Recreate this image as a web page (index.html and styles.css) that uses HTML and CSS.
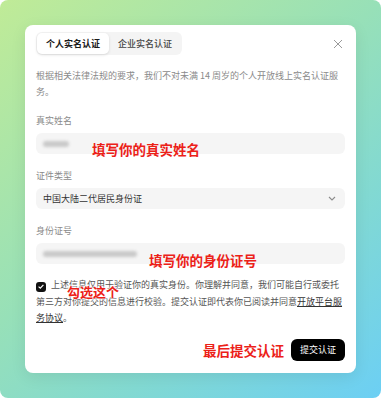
FILE: index.html
```html
<!DOCTYPE html>
<html lang="zh-CN">

<head>
    <meta charset="UTF-8">
    <meta name="viewport" content="width=device-width, initial-scale=1.0">
    <title>实名认证</title>
    <link rel="stylesheet" href="styles.css">
</head>

<body>
    <div class="backdrop">
        <div class="modal">
            <div class="modal-header">
                <div class="tabs">
                    <button class="tab tab-active">个人实名认证</button>
                    <button class="tab">企业实名认证</button>
                </div>
                <button class="close-button">
                    <svg width="10" height="10" viewBox="0 0 10 10" fill="none" stroke="#9a9a9a" stroke-width="1">
                        <path d="M1 1L9 9M9 1L1 9" />
                    </svg>
                </button>
            </div>

            <p class="intro">根据相关法律法规的要求，我们不对未满 14 周岁的个人开放线上实名认证服务。</p>

            <div class="field field-first">
                <div class="field-label">真实姓名</div>
                <div class="field-box">
                    <span class="blurred blurred-name"></span>
                </div>
                <span class="note note-name">填写你的真实姓名</span>
            </div>

            <div class="field">
                <div class="field-label">证件类型</div>
                <div class="field-box field-select">
                    <span>中国大陆二代居民身份证</span>
                    <svg width="8" height="5" viewBox="0 0 8 5" fill="none" stroke="#8c8c8c" stroke-width="1.1">
                        <path d="M1 1L4 4L7 1" />
                    </svg>
                </div>
            </div>

            <div class="field">
                <div class="field-label">身份证号</div>
                <div class="field-box">
                    <span class="blurred blurred-id"></span>
                </div>
                <span class="note note-id">填写你的身份证号</span>
            </div>

            <div class="agree">
                <span class="checkbox">
                    <svg width="6" height="5" viewBox="0 0 6 5" fill="none" stroke="#fff" stroke-width="1.2">
                        <path d="M0.6 2.6L2.3 4.1L5.4 0.8" />
                    </svg>
                </span>上述信息仅用于验证你的真实身份。你理解并同意，我们可能自行或委托第三方对你提交的信息进行校验。提交认证即代表你已阅读并同意<a class="agree-link">开放平台服务协议</a>。
                <span class="note note-check">勾选这个</span>
            </div>

            <div class="modal-footer">
                <span class="note-inline">最后提交认证</span>
                <button class="submit-button">提交认证</button>
            </div>
        </div>
    </div>
</body>

</html>
```

FILE: styles.css
```css
body {
    margin: 0;
    background-color: #ffffff;
    font-family: "Noto Sans CJK SC", "Noto Sans", sans-serif;
}

.backdrop {
    width: 381px;
    height: 398px;
    box-sizing: border-box;
    padding: 25px;
    border-radius: 8px;
    background: linear-gradient(140deg, #c0eb97 0%, #97e0b8 45%, #82d9d2 70%, #6ccff4 100%);
}

.modal {
    background-color: #ffffff;
    border-radius: 8px;
    padding: 7px 11px 12px 11px;
    box-shadow: 0 4px 16px rgba(0, 0, 0, 0.08);
}

.modal-header {
    display: flex;
    justify-content: space-between;
    align-items: center;
}

.tabs {
    display: flex;
    background-color: #f4f4f4;
    border-radius: 6px;
    padding: 1px;
}

.tab {
    border: none;
    background: none;
    font-family: inherit;
    font-size: 9px;
    font-weight: 500;
    color: #444;
    height: 21px;
    padding: 0 9px;
    border-radius: 5px;
    line-height: 21px;
}

.tab-active {
    background-color: #ffffff;
    color: #1a1a1a;
    font-weight: 600;
    box-shadow: 0 1px 3px rgba(0, 0, 0, 0.12);
}

.close-button {
    border: none;
    background: none;
    padding: 0;
    margin-right: 2px;
    display: flex;
}

.intro {
    margin: 13px 0 0 0;
    font-size: 9px;
    line-height: 16px;
    color: #8a8a8a;
}

.field {
    position: relative;
    margin-top: 15px;
}

.field-first {
    margin-top: 14px;
}

.field-label {
    font-size: 9px;
    line-height: 14px;
    color: #8a8a8a;
}

.field-box {
    margin-top: 5px;
    height: 21px;
    border-radius: 6px;
    background-color: #f5f5f5;
    display: flex;
    align-items: center;
    padding: 0 7px;
    font-size: 9px;
    color: #333;
}

.field-select {
    justify-content: space-between;
    padding-right: 9px;
}

.blurred {
    height: 6px;
    background-color: #c9c9c9;
    border-radius: 3px;
    filter: blur(1.5px);
}

.blurred-name {
    width: 26px;
}

.blurred-id {
    width: 94px;
}

.note {
    position: absolute;
    font-size: 13.5px;
    font-weight: 700;
    line-height: 16px;
    color: #ec2118;
    white-space: nowrap;
}

.note-name {
    left: 56px;
    top: 27px;
}

.note-id {
    left: 113px;
    top: 28px;
}

.agree {
    position: relative;
    margin-top: 13px;
    font-size: 9px;
    line-height: 16.5px;
    color: #555;
}

.checkbox {
    display: inline-flex;
    align-items: center;
    justify-content: center;
    width: 10px;
    height: 10px;
    border-radius: 3px;
    background-color: #111;
    margin-right: 5px;
    vertical-align: -1px;
}

.agree-link {
    color: #333;
    text-decoration: underline;
}

.note-check {
    left: 31px;
    top: 7px;
    font-size: 13px;
    text-shadow: 0 0 2px #fff, 0 0 2px #fff, 0 0 3px #fff;
}

.modal-footer {
    display: flex;
    justify-content: flex-end;
    align-items: center;
    gap: 7px;
    margin-top: 12px;
}

.note-inline {
    font-size: 13.5px;
    font-weight: 700;
    color: #ec2118;
}

.submit-button {
    border: none;
    background-color: #000;
    color: #fff;
    font-family: inherit;
    font-size: 9px;
    height: 22px;
    width: 54px;
    border-radius: 6px;
    padding: 0;
}
```
